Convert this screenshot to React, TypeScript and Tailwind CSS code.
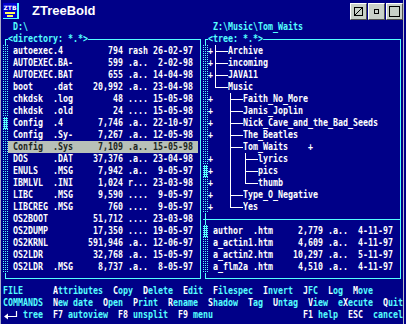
import React from 'react';

type FileEntry = { n: string; e?: string; s: string; a: string; d: string };

const leftFiles: FileEntry[] = [
  { n: 'autoexec', e: '4', s: '794', a: 'rash', d: '26-02-97' },
  { n: 'AUTOEXEC', e: 'BA-', s: '599', a: '.a..', d: '2-02-98' },
  { n: 'AUTOEXEC', e: 'BAT', s: '655', a: '.a..', d: '14-04-98' },
  { n: 'boot', e: 'dat', s: '20,992', a: '.a..', d: '23-04-98' },
  { n: 'chkdsk', e: 'log', s: '48', a: '....', d: '15-05-98' },
  { n: 'chkdsk', e: 'old', s: '24', a: '....', d: '15-05-98' },
  { n: 'Config', e: '4', s: '7,746', a: '.a..', d: '22-10-97' },
  { n: 'Config', e: 'Sy-', s: '7,267', a: '.a..', d: '12-05-98' },
  { n: 'Config', e: 'Sys', s: '7,109', a: '.a..', d: '15-05-98' },
  { n: 'DOS', e: 'DAT', s: '37,376', a: '.a..', d: '23-04-98' },
  { n: 'ENULS', e: 'MSG', s: '7,942', a: '.a..', d: '9-05-97' },
  { n: 'IBMLVL', e: 'INI', s: '1,024', a: 'r...', d: '23-03-98' },
  { n: 'LIBC', e: 'MSG', s: '9,590', a: '....', d: '9-05-97' },
  { n: 'LIBCREG', e: 'MSG', s: '760', a: '....', d: '9-05-97' },
  { n: 'OS2BOOT', s: '51,712', a: '....', d: '23-03-98' },
  { n: 'OS2DUMP', s: '17,350', a: '....', d: '19-05-97' },
  { n: 'OS2KRNL', s: '591,946', a: '.a..', d: '12-06-97' },
  { n: 'OS2LDR', s: '32,768', a: '.a..', d: '15-05-97' },
  { n: 'OS2LDR', e: 'MSG', s: '8,737', a: '.a..', d: '8-05-97' },
];

const rightFiles: FileEntry[] = [
  { n: 'author', e: 'htm', s: '2,779', a: '.a..', d: '4-11-97' },
  { n: 'a_actin1', e: 'htm', s: '4,609', a: '.a..', d: '4-11-97' },
  { n: 'a_actin2', e: 'htm', s: '10,297', a: '.a..', d: '5-11-97' },
  { n: 'a_flm2a', e: 'htm', s: '4,510', a: '.a..', d: '4-11-97' },
];

// connector codes: | vertical, T tee, L corner, - horizontal
const tree: { plus: boolean; c: string; t: string }[] = [
  { plus: true, c: 'T--', t: 'Archive' },
  { plus: true, c: 'T--', t: 'incoming' },
  { plus: true, c: 'T--', t: 'JAVA11' },
  { plus: false, c: 'L--', t: 'Music' },
  { plus: true, c: '   T--', t: 'Faith_No_More' },
  { plus: true, c: '   T--', t: 'Janis_Joplin' },
  { plus: true, c: '   T--', t: 'Nick_Cave_and_the_Bad_Seeds' },
  { plus: true, c: '   T--', t: 'The_Beatles' },
  { plus: false, c: '   T--', t: 'Tom_Waits    +' },
  { plus: true, c: '   |  T--', t: 'lyrics' },
  { plus: true, c: '   |  T--', t: 'pics' },
  { plus: true, c: '   |  L--', t: 'thumb' },
  { plus: true, c: '   T--', t: 'Type_O_Negative' },
  { plus: true, c: '   L--', t: 'Yes' },
];

const fmt = (f: FileEntry) =>
  ' ' +
  (f.n.padEnd(8) + (f.e ? '.' + f.e : '')).padEnd(12) +
  f.s.padStart(10) +
  ' ' +
  f.a +
  ' ' +
  f.d.padStart(8) +
  ' ';

// text cell is 5x12; the mono font is squeezed to fit
const Txt = ({ children, className = '' }: { children: React.ReactNode; className?: string }) => (
  <span
    className={`block shrink-0 h-[12px] whitespace-pre origin-left scale-x-[0.755] font-['DejaVu_Sans_Mono',monospace] text-[11px] leading-[12px] font-bold ${className}`}
  >
    {children}
  </span>
);

const Row = ({ children, className = '' }: { children: React.ReactNode; className?: string }) => (
  <div className={`h-[12px] shrink-0 flex ${className}`}>{children}</div>
);

const Scroll = ({ rows, thumb }: { rows: number; thumb: number }) => (
  <div className="-ml-[3px] w-[5px] shrink-0 flex flex-col bg-[#000088]">
    {Array.from({ length: rows }).map((_, i) =>
      i === thumb ? (
        <div
          key={i}
          className="h-[12px] bg-[#55ffff] bg-[conic-gradient(at_1px_1px,transparent_75%,#000088_0)] bg-[length:2px_2px]"
        />
      ) : (
        <div
          key={i}
          className="h-[12px] bg-[conic-gradient(at_1px_1px,transparent_75%,#55ffff_0)] bg-[length:2px_2px]"
        />
      )
    )}
  </div>
);

const Conn = ({ t }: { t: string }) => {
  const top = t === '|' || t === 'T' || t === 'L' ? 'ml-[2px] border-l border-white' : '';
  const bot =
    t === '|'
      ? 'ml-[2px] border-l border-white'
      : t === 'T'
      ? 'ml-[2px] border-l border-t border-white'
      : t === 'L'
      ? 'ml-[2px] border-t border-white'
      : t === '-'
      ? 'border-t border-white'
      : '';
  return (
    <div className="w-[5px] h-[12px] shrink-0 flex flex-col">
      <div className={`h-[6px] ${top}`} />
      <div className={`h-[6px] ${bot}`} />
    </div>
  );
};

const Panel = ({ label, children }: { label: string; children: React.ReactNode }) => (
  <div className="w-[200px] h-[252px] shrink-0">
    <div className="mt-[6px] mx-[2px] h-[240px] border border-[#55ffff] flex flex-col">
      <Row className="-mt-[7px] ml-[2px]">
        <Txt className="text-[#55ffff] bg-[#000088]">{label}</Txt>
      </Row>
      {children}
    </div>
  </div>
);

const FileList = ({ files, hi }: { files: FileEntry[]; hi?: number }) => (
  <div className="flex flex-col">
    {files.map((f, i) => (
      <Row key={i} className={i === hi ? 'w-[190px] bg-[#b8c0b8]' : ''}>
        <Txt className={i === hi ? 'text-[#202420]' : 'text-white'}>{fmt(f)}</Txt>
      </Row>
    ))}
  </div>
);

const C = 'text-[#55ffff]';
const W = 'text-white';

const Menu = ({ head, items }: { head: string; items: [string, number][] }) => (
  <Row>
    <Txt>
      <span className={C}>{head.padEnd(10)}</span>
      {items.map(([w, k], i) => (
        <React.Fragment key={i}>
          <span className={C}>{w.slice(0, k)}</span>
          <span className={W}>{w[k]}</span>
          <span className={C}>{w.slice(k + 1)}</span>
          {i < items.length - 1 ? '  ' : ''}
        </React.Fragment>
      ))}
    </Txt>
  </Row>
);

const TitleButton = ({ children }: { children: React.ReactNode }) => (
  <div className="w-[17px] h-[17px] bg-[#c8d0c8] border border-t-white border-l-white border-b-[#505050] border-r-[#505050] flex items-center justify-center">
    {children}
  </div>
);

export default function App() {
  return (
    <div className="w-[406px] h-[324px] overflow-hidden bg-[#000088] border-l border-[#a8acc8]">
      <div className="w-[403px] h-full flex flex-col border-r border-[#b8bcc8]">
        {/* title bar */}
        <div className="h-[21px] shrink-0 flex items-center pl-[2px]">
          <div className="w-[16px] h-[16px] bg-[#0000d0] border-r-2 border-b border-[#55ffff] flex flex-col items-center pt-[1px]">
            <span className="font-['DejaVu_Sans',sans-serif] text-[6px] leading-[7px] font-bold text-white">ZTB</span>
            <div className="mt-[1px] w-[10px] h-[2px] bg-[#ffff55]" />
            <div className="mt-[1px] w-[6px] h-[2px] bg-[#ffff55]" />
          </div>
          <span className="ml-[13px] font-['Liberation_Sans',sans-serif] text-[13px] font-bold text-white">ZTreeBold</span>
          <div className="ml-auto flex gap-[1px] self-start mt-[3px]">
            <TitleButton>
              <svg width="9" height="9" viewBox="0 0 9 9">
                <rect x="0.5" y="0.5" width="8" height="8" fill="none" stroke="#000" />
                <path d="M1 8L8 1" stroke="#000" />
              </svg>
            </TitleButton>
            <TitleButton>
              <svg width="5" height="5" viewBox="0 0 5 5">
                <rect x="0.5" y="0.5" width="4" height="4" fill="none" stroke="#000" />
              </svg>
            </TitleButton>
            <TitleButton>
              <svg width="11" height="11" viewBox="0 0 11 11">
                <rect x="0.5" y="0.5" width="10" height="10" fill="none" stroke="#000" />
              </svg>
            </TitleButton>
          </div>
        </div>

        {/* text screen, 80x25 */}
        <div className="ml-[2px] w-[400px] flex flex-col">
          <Row>
            <Txt className={C}>{'  D:\\'.padEnd(42) + 'Z:\\Music\\Tom_Waits'}</Txt>
          </Row>

          <div className="flex">
            <Panel label="<directory: *.*>">
              <div className="flex">
                <Scroll rows={19} thumb={6} />
                <FileList files={leftFiles} hi={8} />
              </div>
            </Panel>

            <Panel label="<tree: *.*>">
              <div className="flex">
                <Scroll rows={14} thumb={10} />
                <div className="flex flex-col">
                  {tree.map((r, i) => (
                    <Row key={i}>
                      <div className="w-[5px] shrink-0 flex">
                        <Txt className={W}>{r.plus ? '+' : ' '}</Txt>
                      </div>
                      {r.c.split('').map((ch, j) => (
                        <Conn key={j} t={ch} />
                      ))}
                      <Txt className={W}>{r.t}</Txt>
                    </Row>
                  ))}
                </div>
              </div>
              <div className="-ml-[3px] h-[12px] shrink-0 flex flex-col">
                <div className="h-[6px]" />
                <div className="h-[6px] border-t border-[#55ffff]" />
              </div>
              <div className="flex">
                <Scroll rows={4} thumb={0} />
                <FileList files={rightFiles} />
              </div>
            </Panel>
          </div>

          <Menu
            head="FILE"
            items={[
              ['Attributes', 0],
              ['Copy', 0],
              ['Delete', 0],
              ['Edit', 0],
              ['Filespec', 0],
              ['Invert', 0],
              ['JFC', 0],
              ['Log', 0],
              ['Move', 0],
            ]}
          />
          <Menu
            head="COMMANDS"
            items={[
              ['New date', 0],
              ['Open', 0],
              ['Print', 0],
              ['Rename', 0],
              ['Shadow', 0],
              ['Tag', 0],
              ['Untag', 0],
              ['View', 0],
              ['eXecute', 1],
              ['Quit', 0],
            ]}
          />
          <Row>
            <svg width="15" height="12" viewBox="0 0 15 12" className="shrink-0">
              <path d="M13.5 2V7.5H2" stroke="#fff" fill="none" strokeWidth="1.2" />
              <path d="M1 7.5L5 4.5V10.5Z" fill="#fff" />
            </svg>
            <Txt>
              <span className={C}>{' tree  '}</span>
              <span className={W}>F7</span>
              <span className={C}>{' autoview  '}</span>
              <span className={W}>F8</span>
              <span className={C}>{' unsplit  '}</span>
              <span className={W}>F9</span>
              <span className={C}>{' menu'.padEnd(23)}</span>
              <span className={W}>F1</span>
              <span className={C}>{' help  '}</span>
              <span className={W}>ESC</span>
              <span className={C}>{'  cancel'}</span>
            </Txt>
          </Row>
        </div>
      </div>
    </div>
  );
}
